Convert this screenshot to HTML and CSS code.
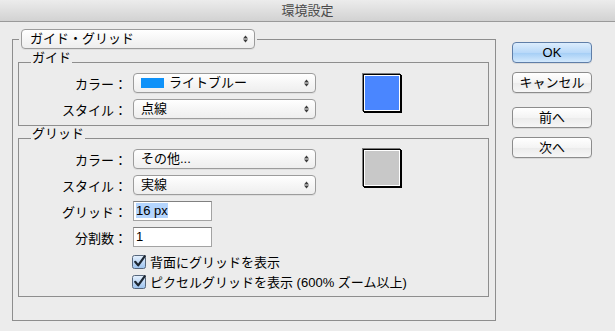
FILE: index.html
```html
<!DOCTYPE html>
<html lang="ja">
<head>
  <meta charset="UTF-8" />
  <title>環境設定</title>
  <meta name="viewport" content="width=device-width, initial-scale=1.0" />
  <link rel="stylesheet" href="styles.css">
</head>
<body>

  <div class="titlebar">環境設定</div>

  <div class="dialog">
    <fieldset class="panel">
      <legend class="panel-legend">
        <div class="popup popup-section">
          <span class="popup-text">ガイド・グリッド</span>
          <svg class="arrows" width="5" height="8" viewBox="0 0 5 8"><polygon points="2.5,0.5 5,3.4 0,3.4" /><polygon points="0,4.6 5,4.6 2.5,7.5" /></svg>
        </div>
      </legend>

      <fieldset class="group group-guide">
        <legend class="group-legend">ガイド</legend>
        <div class="group-top">
          <div class="rows">
            <div class="row">
              <span class="label">カラー：</span>
              <div class="popup">
                <span class="chip"></span>
                <span class="popup-text">ライトブルー</span>
                <svg class="arrows" width="5" height="8" viewBox="0 0 5 8"><polygon points="2.5,0.5 5,3.4 0,3.4" /><polygon points="0,4.6 5,4.6 2.5,7.5" /></svg>
              </div>
            </div>
            <div class="row">
              <span class="label">スタイル：</span>
              <div class="popup">
                <span class="popup-text">点線</span>
                <svg class="arrows" width="5" height="8" viewBox="0 0 5 8"><polygon points="2.5,0.5 5,3.4 0,3.4" /><polygon points="0,4.6 5,4.6 2.5,7.5" /></svg>
              </div>
            </div>
          </div>
          <div class="swatch swatch-blue"></div>
        </div>
      </fieldset>

      <fieldset class="group group-grid">
        <legend class="group-legend">グリッド</legend>
        <div class="group-top">
          <div class="rows">
            <div class="row">
              <span class="label">カラー：</span>
              <div class="popup">
                <span class="popup-text">その他...</span>
                <svg class="arrows" width="5" height="8" viewBox="0 0 5 8"><polygon points="2.5,0.5 5,3.4 0,3.4" /><polygon points="0,4.6 5,4.6 2.5,7.5" /></svg>
              </div>
            </div>
            <div class="row">
              <span class="label">スタイル：</span>
              <div class="popup">
                <span class="popup-text">実線</span>
                <svg class="arrows" width="5" height="8" viewBox="0 0 5 8"><polygon points="2.5,0.5 5,3.4 0,3.4" /><polygon points="0,4.6 5,4.6 2.5,7.5" /></svg>
              </div>
            </div>
            <div class="row">
              <span class="label">グリッド：</span>
              <div class="field"><span class="selected">16 px</span></div>
            </div>
            <div class="row">
              <span class="label">分割数：</span>
              <div class="field">1</div>
            </div>
          </div>
          <div class="swatch swatch-gray"></div>
        </div>

        <div class="checks">
          <div class="check-row">
            <svg class="checkbox" width="15" height="15" viewBox="0 0 15 15">
              <defs><linearGradient id="cb1" x1="0" y1="0" x2="0" y2="1"><stop offset="0" stop-color="#e6f1fd" /><stop offset="1" stop-color="#9cc2ee" /></linearGradient></defs>
              <rect x="0.5" y="1.5" width="13" height="13" rx="2" fill="url(#cb1)" stroke="#56667c" />
              <path d="M3.2 7.8 L6.2 11.4 L12.8 2.2" fill="none" stroke="#1d2733" stroke-width="2.2" stroke-linecap="round" stroke-linejoin="round" />
            </svg>
            <span>背面にグリッドを表示</span>
          </div>
          <div class="check-row">
            <svg class="checkbox" width="15" height="15" viewBox="0 0 15 15">
              <defs><linearGradient id="cb2" x1="0" y1="0" x2="0" y2="1"><stop offset="0" stop-color="#e6f1fd" /><stop offset="1" stop-color="#9cc2ee" /></linearGradient></defs>
              <rect x="0.5" y="1.5" width="13" height="13" rx="2" fill="url(#cb2)" stroke="#56667c" />
              <path d="M3.2 7.8 L6.2 11.4 L12.8 2.2" fill="none" stroke="#1d2733" stroke-width="2.2" stroke-linecap="round" stroke-linejoin="round" />
            </svg>
            <span>ピクセルグリッドを表示 (600% ズーム以上)</span>
          </div>
        </div>
      </fieldset>
    </fieldset>

    <div class="buttons">
      <button class="btn btn-default">OK</button>
      <button class="btn btn-cancel">キャンセル</button>
      <button class="btn btn-prev">前へ</button>
      <button class="btn">次へ</button>
    </div>
  </div>

</body>
</html>
```

FILE: styles.css
```css
* {
  box-sizing: border-box;
}
html, body {
  margin: 0;
}
body {
  width: 615px;
  height: 331px;
  overflow: hidden;
  background: #ececec;
  font-family: "Liberation Sans", "Noto Sans CJK JP", sans-serif;
  font-size: 13px;
  color: #000;
}

.titlebar {
  height: 22px;
  line-height: 21px;
  text-align: center;
  color: #4a4a4a;
  background: linear-gradient(#ececec, #d2d2d2);
  border-bottom: 1px solid #9a9a9a;
}

.dialog {
  display: flex;
  align-items: flex-start;
  padding: 7px 0 0 12px;
}

/* group boxes */
.panel {
  width: 484px;
  margin: 0;
  padding: 0 6px 23px 5px;
  border: 1px solid #8e8e8e;
  min-inline-size: 0;
}
.panel-legend {
  margin-left: 1px;
  padding: 0 2px;
}
.group {
  margin: 2px 0 0;
  padding: 0 0 6px;
  border: 1px solid #8e8e8e;
  min-inline-size: 0;
}
.group-grid {
  margin-top: 1px;
}
.group-legend {
  margin-left: 12px;
  padding: 0 1px 8px;
  line-height: 14px;
}

.group-top {
  display: flex;
  align-items: flex-start;
}
.rows {
  display: flex;
  flex-direction: column;
  gap: 6px;
}
.row {
  display: flex;
  align-items: center;
  height: 20px;
}
.label {
  width: 108px;
  margin-right: 6px;
  text-align: right;
  white-space: nowrap;
}

/* popup menus */
.popup {
  display: flex;
  align-items: center;
  width: 183px;
  height: 20px;
  padding: 0 6px 0 7px;
  border: 1px solid #9c9c9c;
  border-radius: 4px;
  background: linear-gradient(#ffffff, #f6f6f6 50%, #eeeeee);
  box-shadow: 0 1px 0 rgba(0,0,0,0.06);
  white-space: nowrap;
}
.popup-section {
  width: 234px;
  padding-left: 8px;
}
.popup-text {
  flex: 1;
  line-height: 18px;
}
.arrows {
  flex: none;
  fill: #3c3c3c;
}
.chip {
  flex: none;
  width: 23px;
  height: 10px;
  margin-right: 5px;
  background: #0f92f9;
}

/* colour wells */
.swatch {
  flex: none;
  width: 38px;
  height: 38px;
  margin-left: 47px;
  border: 1px solid #000;
  box-shadow: -1px -1px 0 #7c7c7c, 1px 1px 0 #000, inset 0 0 0 1px #fff;
}
.swatch-blue {
  margin-top: 1px;
  background: #4a86ff;
}
.swatch-gray {
  background: #c8c8c8;
}

/* text fields */
.field {
  width: 79px;
  height: 20px;
  padding: 0 2px;
  border: 1px solid #a3a3a3;
  border-top-color: #808080;
  background: #fff;
  line-height: 18px;
}
.selected {
  background: #b4d5fe;
}

/* checkboxes */
.checks {
  display: flex;
  flex-direction: column;
  gap: 2px;
  margin-top: 5px;
  padding-left: 113px;
}
.check-row {
  display: flex;
  align-items: center;
  height: 18px;
  white-space: nowrap;
}
.checkbox {
  flex: none;
  margin-right: 3px;
}

/* buttons */
.buttons {
  display: flex;
  flex-direction: column;
  gap: 9px;
  margin: 13px 0 0 16px;
}
.btn {
  display: block;
  width: 80px;
  height: 21px;
  padding: 0;
  border: 1px solid #8c8c8c;
  border-radius: 4px;
  background: linear-gradient(#ffffff, #f4f4f4 50%, #ebebeb 51%, #f6f6f6);
  box-shadow: 0 1px 0 rgba(0,0,0,0.08);
  font: inherit;
  line-height: 19px;
  color: #000;
}
.btn-default {
  border-color: #5f7ea8;
  background: linear-gradient(#dcedfd, #b9d9f9 50%, #a3cdf5 51%, #d3e9fd);
}
.btn-prev {
  margin-top: 5px;
}
```
